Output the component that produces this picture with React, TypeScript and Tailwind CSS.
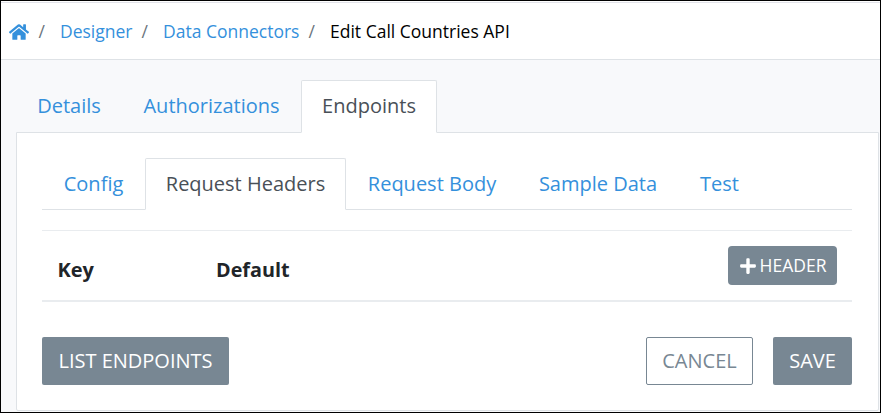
import { FaHome, FaPlus } from "react-icons/fa";

function Crumb({ children, w }: { children: string; w: string }) {
  return <a className={`${w} whitespace-nowrap text-[#3490dc]`}>{children}</a>;
}

function Slash() {
  return <span className="w-[31px] pl-[9.5px] text-[#6c757d]">/</span>;
}

function Tab({ label, active, w }: { label: string; active?: boolean; w: string }) {
  return (
    <a
      className={`${w} -mb-px flex items-start justify-center whitespace-nowrap text-[20px] leading-[30px] ${
        active
          ? "rounded-t-xs border border-[#dee2e6] border-b-white bg-white pt-[10px] text-[#495057]"
          : "pt-[11px] text-[#3490dc]"
      }`}
    >
      {label}
    </a>
  );
}

export default function App() {
  return (
    <div className="h-[413px] w-[881px] overflow-hidden border border-black bg-[#f8f9fb] font-['Open_Sans',sans-serif] text-[#212529]">
      <div className="h-[2px] border-b border-[#e2e3ea] bg-white" />
      <nav className="flex h-[57px] items-center border-b border-[#dee2e6] bg-white pl-2 text-[17.5px]">
        <FaHome className="mt-px h-5 w-5 text-[#3490dc]" />
        <Slash />
        <Crumb w="w-[72px]">Designer</Crumb>
        <Slash />
        <Crumb w="w-[136px]">Data Connectors</Crumb>
        <Slash />
        <span className="whitespace-nowrap text-black">Edit Call Countries API</span>
      </nav>
      <div className="flex h-[72px] pl-[15px] pt-5">
        <Tab w="w-[106px]" label="Details" />
        <Tab w="w-[179px]" label="Authorizations" />
        <Tab w="w-[136px]" label="Endpoints" active />
      </div>
      <main className="ml-[15px] h-[279px] w-[863px] rounded-b-xs border border-[#dee2e6] bg-white pl-[25px] pr-[26px] pt-[25px]">
        <div className="flex h-[52px] border-b border-[#dee2e6]">
          <Tab w="w-[103px]" label="Config" />
          <Tab w="w-[201px]" label="Request Headers" active />
          <Tab w="w-[172px]" label="Request Body" />
          <Tab w="w-[160px]" label="Sample Data" />
          <Tab w="w-[83px]" label="Test" />
        </div>
        <div className="mt-5 flex h-[72px] items-start border-t border-b-2 border-[#e9ecef] px-[15px] pt-[15px] text-[20px] font-bold">
          <span className="w-[159px] pt-[9px] pl-[0.5px]">Key</span>
          <span className="flex-1 pt-[9px] text-[19.8px]">Default</span>
          <button className="flex h-[39px] w-[109px] items-center justify-center gap-[3px] rounded bg-[#788793] text-[17.5px] font-normal text-white">
            <FaPlus className="h-[18px] w-[18px]" />
            HEADER
          </button>
        </div>
        <div className="mt-[35px] flex text-[20px]">
          <button className="h-12 w-[187px] rounded-xs bg-[#788793] text-white">LIST ENDPOINTS</button>
          <button className="ml-auto h-12 w-[107px] rounded-xs border border-[#788793] text-[#788793]">CANCEL</button>
          <button className="ml-5 h-12 w-[79px] rounded-xs bg-[#788793] text-white">SAVE</button>
        </div>
      </main>
    </div>
  );
}
